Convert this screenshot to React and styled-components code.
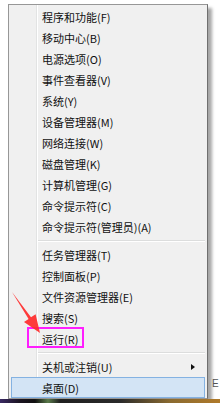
import React from "react";
import styled, { createGlobalStyle } from "styled-components";

const GlobalStyle = createGlobalStyle`
  html, body {
    margin: 0;
    padding: 0;
    background: #ffffff;
  }
  body {
    font-family: "Noto Sans CJK SC", "Microsoft YaHei", sans-serif;
  }
`;

const Page = styled.div`
  position: relative;
  width: 220px;
  height: 403px;
  overflow: hidden;
  padding-top: 4px;
  box-sizing: border-box;
  display: flex;
  flex-direction: column;
  background: #ffffff;
`;

const Menu = styled.div`
  margin-left: 8px;
  width: 200px;
  box-sizing: border-box;
  border: 1px solid #979797;
  border-right-color: #6f6f6f;
  padding: 1px 2px 0 2px;
  background: linear-gradient(
    to right,
    #f0f0f0 0 27px,
    #e2e3e3 27px 28px,
    #ffffff 28px 29px,
    #f0f0f0 29px
  );
  box-shadow: 4px 4px 3px rgba(0, 0, 0, 0.35);
  display: flex;
  flex-direction: column;
`;

const Item = styled.div`
  height: 21px;
  box-sizing: border-box;
  display: flex;
  align-items: center;
  padding-left: 30px;
  padding-right: 9px;
  border: 1px solid ${(p) => (p.$active ? "#84b2e2" : "transparent")};
  background: ${(p) => (p.$active ? "#d3e4f5" : "transparent")};
  font-size: 11px;
  color: #111;
  white-space: nowrap;
`;

const Label = styled.span`
  flex: 1;
`;

const SubArrow = styled.span`
  width: 0;
  height: 0;
  border-left: 4px solid #111;
  border-top: 3.5px solid transparent;
  border-bottom: 3.5px solid transparent;
`;

const Separator = styled.div`
  height: 7px;
  box-sizing: border-box;
  padding: 3px 0 0 27px;
  &::after {
    content: "";
    display: block;
    height: 1px;
    background: #dcdddd;
    border-bottom: 1px solid #ffffff;
  }
`;

const Taskbar = styled.div`
  flex: 1;
  background: linear-gradient(
    to right,
    #3b2a63 0px,
    #1a1420 20px,
    #101010 35px,
    #5a7a4a 48px,
    #202020 60px,
    #2a2a2a 120px,
    #8a6a30 170px,
    #b07a2a 220px
  );
`;

const Annotation = styled.div`
  position: absolute;
  left: 27px;
  top: 327px;
  width: 57px;
  height: 21px;
  box-sizing: border-box;
  border: 2px solid #ff1eff;
  pointer-events: none;
`;

const ArrowSvg = styled.svg`
  position: absolute;
  left: 5px;
  top: 285px;
  width: 40px;
  height: 55px;
  pointer-events: none;
`;

const BackText = styled.span`
  position: absolute;
  left: 212px;
  top: 378px;
  font-family: "Liberation Sans", sans-serif;
  font-size: 10px;
  color: #555;
`;

const groups = [
  [
    "程序和功能(F)",
    "移动中心(B)",
    "电源选项(O)",
    "事件查看器(V)",
    "系统(Y)",
    "设备管理器(M)",
    "网络连接(W)",
    "磁盘管理(K)",
    "计算机管理(G)",
    "命令提示符(C)",
    "命令提示符(管理员)(A)",
  ],
  ["任务管理器(T)", "控制面板(P)", "文件资源管理器(E)", "搜索(S)", "运行(R)"],
];

export default function App() {
  return (
    <>
      <GlobalStyle />
      <Page>
        <BackText>E</BackText>
        <Menu>
          {groups.map((g, gi) => (
            <React.Fragment key={gi}>
              {g.map((t) => (
                <Item key={t}>
                  <Label>{t}</Label>
                </Item>
              ))}
              <Separator />
            </React.Fragment>
          ))}
          <Item>
            <Label>关机或注销(U)</Label>
            <SubArrow />
          </Item>
          <Item $active>
            <Label>桌面(D)</Label>
          </Item>
        </Menu>
        <Taskbar />
        <Annotation />
        <ArrowSvg viewBox="0 0 40 55">
          <polygon
            points="7,7 26,32.3 30.6,29.2 35,48 19,37 23.6,33.9"
            fill="#ff2b2b"
            opacity="0.92"
          />
        </ArrowSvg>
      </Page>
    </>
  );
}
